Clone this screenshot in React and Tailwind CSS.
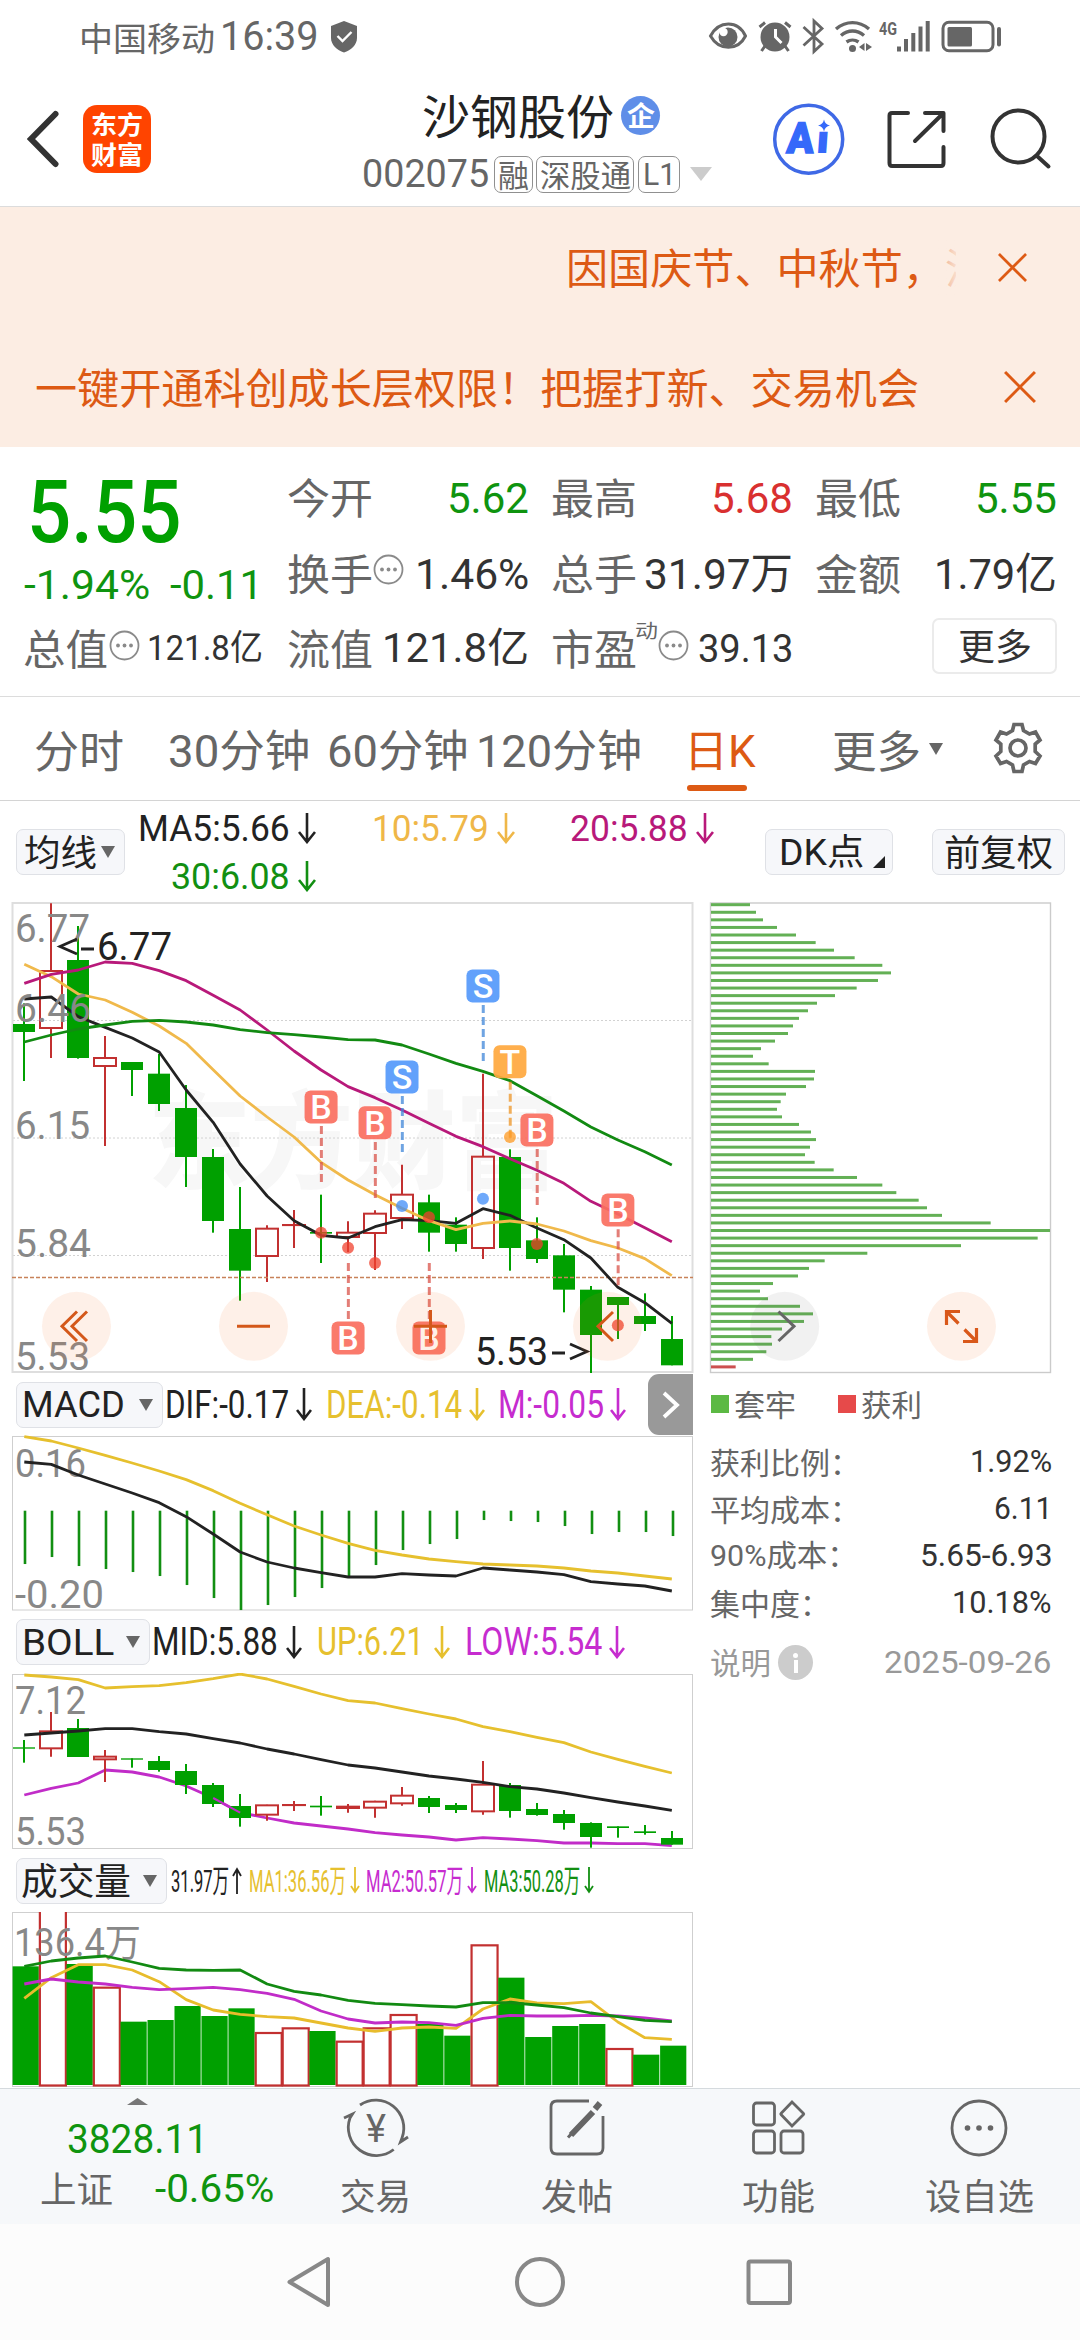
import React, { useLayoutEffect, useRef, useState } from "react";

const CJK_ONLY = /^[\u3000-\u9fff\uff00-\uffef]+$/;

/* Text squeezed or stretched to a fixed ink width; pure Chinese runs sit slightly lower than digits. */
function Fit({ w, className = "", children }) {
  const ref = useRef(null);
  const [s, setS] = useState(1);
  useLayoutEffect(() => {
    setS((w + 4) / ref.current.offsetWidth);
  }, [w]);
  const dy = CJK_ONLY.test(children) ? 1.5 : 0;
  return (
    <span className={"block shrink-0 whitespace-nowrap leading-none " + className} style={{ width: w }}>
      <span ref={ref} className="inline-block origin-left" style={{ transform: `translate(-2px, ${dy}px) scaleX(${s})` }}>
        {children}
      </span>
    </span>
  );
}

const G = "#00a000";
const R = "#c23030";

/* ---------- chart data (pixel values in each chart's own scale) ---------- */
const KLINE = [
  ["g", 340, 402, 426, 573], ["r", 40, 243, 414, 504], ["g", 108, 210, 504, 506], ["r", 438, 504, 528, 768],
  ["g", 516, 516, 540, 618], ["g", 492, 551, 642, 663], ["g", 585, 654, 801, 891], ["g", 777, 801, 993, 1028],
  ["g", 891, 1017, 1142, 1232], ["r", 1006, 1016, 1098, 1176], ["r", 960, 1005, 1005, 1074], ["g", 914, 1026, 1031, 1119],
  ["r", 994, 1028, 1041, 1086], ["r", 961, 971, 1029, 1140], ["r", 824, 914, 984, 1017], ["g", 914, 937, 1028, 1085],
  ["g", 982, 1004, 1062, 1085], ["r", 551, 800, 1074, 1107], ["g", 778, 801, 1074, 1142], ["g", 982, 1051, 1107, 1119],
  ["g", 1062, 1096, 1199, 1267], ["g", 1188, 1199, 1335, 1449], ["g", 1221, 1221, 1245, 1347], ["g", 1210, 1278, 1302, 1323],
  ["g", 1278, 1347, 1426, 1426],
];
const MA5 = [327, 321, 380, 412, 444, 486, 600, 697, 822, 918, 992, 1036, 1044, 1010, 989, 992, 1000, 956, 976, 1014, 1049, 1104, 1192, 1238, 1300];
const MA10 = [223, 260, 312, 330, 367, 408, 460, 539, 618, 681, 741, 817, 870, 914, 955, 992, 1019, 1000, 993, 1002, 1023, 1052, 1074, 1106, 1157];
const MA20 = [280, 253, 240, 216, 220, 242, 272, 316, 360, 420, 483, 540, 590, 623, 660, 700, 739, 770, 806, 841, 880, 934, 972, 1013, 1055];
const MA30 = [456, 435, 417, 405, 394, 391, 396, 405, 419, 428, 434, 441, 449, 450, 465, 492, 520, 544, 572, 617, 663, 711, 750, 785, 825];
const HIST = [582, 561, 588, 597, 606, 618, 645, 684, 720, 705, 681, 654, 624, 585, 540, 522, 507, 450, 453, 456, 468, 492, 486, 486, 498];
const DIF = [276, 283, 315, 342, 369, 398, 440, 492, 546, 576, 594, 608, 621, 621, 611, 615, 618, 594, 600, 606, 614, 635, 642, 648, 663];
const DEA = [200, 213, 234, 256, 279, 303, 329, 362, 400, 434, 468, 495, 520, 541, 555, 567, 575, 582, 585, 588, 594, 603, 609, 618, 627];
const UP = [45, 51, 59, 84, 80, 77, 68, 56, 42, 57, 79, 102, 122, 129, 146, 162, 177, 200, 215, 232, 248, 276, 298, 319, 339];
const MID = [225, 219, 213, 206, 206, 215, 222, 236, 249, 267, 282, 299, 315, 324, 336, 348, 357, 367, 380, 387, 399, 413, 426, 438, 451];
const LOW = [405, 385, 369, 330, 336, 351, 378, 414, 458, 474, 489, 498, 507, 518, 525, 531, 540, 533, 537, 542, 549, 549, 551, 551, 557];
const BK = [
  ["g", 240, 262, 266, 308], ["r", 156, 214, 265, 290], ["g", 177, 204, 291, 291], ["r", 270, 290, 298, 366],
  ["g", 295, 295, 299, 323], ["g", 288, 303, 330, 335], ["g", 312, 333, 375, 402], ["g", 369, 375, 432, 441],
  ["g", 402, 438, 474, 500], ["r", 434, 436, 464, 482], ["r", 423, 435, 435, 453], ["g", 408, 437, 442, 467],
  ["r", 432, 440, 444, 458], ["r", 422, 425, 443, 473], ["r", 381, 407, 430, 437], ["g", 408, 414, 441, 459],
  ["g", 429, 435, 450, 459], ["r", 303, 374, 454, 464], ["g", 369, 375, 453, 473], ["g", 429, 447, 465, 467],
  ["g", 450, 462, 489, 509], ["g", 487, 489, 531, 563], ["g", 499, 499, 504, 533], ["g", 495, 514, 519, 524],
  ["g", 513, 534, 554, 554],
];
const VOL = [
  ["g", 919], ["r", 740], ["g", 912], ["r", 980], ["g", 1085], ["g", 1080], ["g", 1038], ["g", 1068], ["g", 1045],
  ["r", 1116], ["r", 1102], ["g", 1113], ["r", 1142], ["r", 1102], ["r", 1062], ["g", 1092], ["g", 1127], ["r", 853],
  ["g", 953], ["g", 1131], ["g", 1098], ["g", 1092], ["r", 1164], ["g", 1184], ["g", 1157],
];
const V1 = [1015, 953, 914, 914, 930, 965, 1019, 1050, 1063, 1070, 1074, 1089, 1104, 1114, 1104, 1101, 1105, 1047, 1017, 1029, 1031, 1025, 1086, 1133, 1138];
const V2 = [972, 957, 966, 972, 982, 989, 986, 982, 989, 1000, 1018, 1053, 1077, 1089, 1086, 1088, 1096, 1075, 1066, 1068, 1068, 1066, 1068, 1074, 1083];
const V3 = [919, 903, 894, 888, 906, 925, 930, 931, 930, 972, 994, 1005, 1021, 1030, 1034, 1038, 1041, 1028, 1028, 1035, 1043, 1059, 1070, 1081, 1085];
const CHIPS = [
  180, 198, 219, 261, 318, 377, 432, 494, 577, 603, 564, 500, 435, 381, 354, 327, 309, 294, 255, 213, 189, 236, 375, 372, 348,
  288, 272, 261, 276, 327, 363, 378, 360, 345, 374, 431, 501, 577, 619, 686, 711, 756, 902, 1080, 1043, 813, 532, 404, 357,
  324, 249, 210, 234, 330, 369, 342, 276, 244, 246, 229, 189, 137,
];

const cx = (i) => 24.3 + 26.98 * i;

function Line({ data, base, color, w = 2.8 }) {
  return (
    <polyline fill="none" stroke={color} strokeWidth={w} strokeLinejoin="round" points={data.map((v, i) => `${cx(i)},${base + v / 3}`).join(" ")} />
  );
}

function Candles({ data, base }) {
  return data.map(([c, h, t, b, l], i) => {
    const x = Math.round(cx(i));
    const Y = (v) => base + v / 3;
    if (c === "g")
      return (
        <g key={i} fill={G}>
          <rect x={x - 1} y={Y(h)} width="2" height={(l - h) / 3} />
          <rect x={x - 11} y={Y(t)} width="22" height={(b - t) / 3} />
        </g>
      );
    return (
      <g key={i} stroke={R} strokeWidth="2" fill="none">
        <path d={`M${x} ${Y(h)}V${Y(t)}M${x} ${Y(b)}V${Y(l)}`} />
        <rect x={x - 11} y={Y(t)} width="22" height={Math.max((b - t) / 3, 0.1)} />
      </g>
    );
  });
}

function Axis({ x = 17, y, w, children, fill = "#888888", size = 39 }) {
  return (
    <text x={x - 2} y={y} fontSize={size} fill={fill} textLength={w + 4} lengthAdjust="spacingAndGlyphs">
      {children}
    </text>
  );
}

const MARKS = [
  ["B", 11, 651, 708, 1028], ["B", 13, 698, 756, 1119], ["S", 14, 561, 618, 948], ["S", 17, 288, 345, 926],
  ["T", 18, 515, 575, 741], ["B", 19, 720, 777, 1062], ["B", 22, 960, 1018, 1306], ["B", 12, 1344, 1119, 1073], ["B", 15, 1344, 1119, 982],
];
const MC = { B: ["#fa6f5f", "#d9534a"], S: ["#5599fb", "#3f86d8"], T: ["#ffa83e", "#ec9426"] };

function MainChart() {
  return (
    <svg className="block" width="705" height="472" viewBox="0 902 705 472">
      <text x="148" y="1180" fontSize="106" fontWeight="900" fill="#f7f7f7" textLength="410" lengthAdjust="spacingAndGlyphs">
        东方财富
      </text>
      {[1020.5, 1138, 1255.5].map((y) => (
        <line key={y} x1="13" x2="692" y1={y} y2={y} stroke="#d2d2d2" strokeWidth="1" strokeDasharray="2 2" />
      ))}
      <rect x="12.5" y="903" width="680" height="469" fill="none" stroke="#dedede" strokeWidth="2" />
      <Candles data={KLINE} base={890} />
      <line x1="12" x2="693" y1="1277.5" y2="1277.5" stroke="#c8825a" strokeWidth="1.3" strokeDasharray="4 2" />
      <Line data={MA5} base={890} color="#222" />
      <Line data={MA10} base={890} color="#f0b94b" />
      <Line data={MA20} base={890} color="#b8197a" />
      <Line data={MA30} base={890} color="#128a12" />
      <Axis y={942} w={71}>6.77</Axis>
      <Axis y={1022} w={72}>6.46</Axis>
      <Axis y={1139} w={71}>6.15</Axis>
      <Axis y={1257} w={72}>5.84</Axis>
      <Axis y={1370} w={71}>5.53</Axis>
      <path d="M77 939L60 946.5L77 954M81 949H94" fill="none" stroke="#222" strokeWidth="2.8" />
      <Axis x={99} y={960} w={71} fill="#222">6.77</Axis>
      <Axis x={477} y={1365} w={69} fill="#222">5.53</Axis>
      <path d="M552 1353H565M570 1344L587 1351.5L570 1359" fill="none" stroke="#222" strokeWidth="2.8" />
      {MARKS.map(([t, i, c, d, dot], k) => {
        const x = cx(i);
        const y = 890 + c / 3;
        return (
          <g key={k}>
            <line x1={x + 0.3} x2={x + 0.3} y1={890 + d / 3} y2={890 + d / 3 + 56} stroke={MC[t][1]} strokeOpacity="0.75" strokeWidth="3" strokeDasharray="8 4" />
            <circle cx={x} cy={890 + dot / 3} r="6" fill={t === "B" ? "#f0402e" : t === "S" ? "#3f8cf8" : "#fd9a22"} fillOpacity="0.75" />
            <rect x={x - 16.5} y={y - 16.5} width="33" height="33" rx="6" fill={MC[t][0]} fillOpacity="0.92" />
            <text x={x} y={y + 12} textAnchor="middle" fontSize="34" fontWeight="500" fill="#fff">
              {t}
            </text>
          </g>
        );
      })}
      {[76.5, 253.5, 430.5, 607.5].map((x) => (
        <circle key={x} cx={x} cy="1326.3" r="34.5" fill="#f8681c" fillOpacity="0.1" />
      ))}
      <path
        d="M77 1311.5L62 1326.3L77 1341M87 1311.5L72 1326.3L87 1341M237 1326.3H270M414 1326.3H447M430.5 1310V1343M613 1312L598 1326.3L613 1341"
        fill="none"
        stroke="#d4581a"
        strokeWidth="3"
      />
    </svg>
  );
}

function MacdChart() {
  return (
    <svg className="block" width="705" height="176" viewBox="0 1435 705 176">
      <rect x="12.5" y="1436.5" width="680" height="173.5" fill="none" stroke="#cfcfcf" />
      {HIST.map((v, i) => (
        <rect key={i} x={Math.round(cx(i)) - 0.3} y="1510.7" width="2.6" height={(v - 422) / 3} fill="#128f12" />
      ))}
      <Axis y={1477} w={67} size={38}>0.16</Axis>
      <Axis y={1608} w={85} size={38}>-0.20</Axis>
      <Line data={DIF} base={1370} color="#222" />
      <Line data={DEA} base={1370} color="#e6c02e" />
    </svg>
  );
}

function BollChart() {
  return (
    <svg className="block" width="705" height="177" viewBox="0 1673 705 177">
      <rect x="12.5" y="1674.5" width="680" height="174" fill="none" stroke="#cfcfcf" />
      <Line data={LOW} base={1660} color="#c12cc8" />
      <Candles data={BK} base={1660} />
      <polyline fill="none" stroke="#c12cc8" strokeWidth="2" points={`${cx(7)},1798 ${cx(8)},1812.6`} />
      <Line data={MID} base={1660} color="#222" />
      <Line data={UP} base={1660} color="#e6c02e" />
      <Axis y={1714} w={67} size={38}>7.12</Axis>
      <Axis y={1845} w={67} size={38}>5.53</Axis>
    </svg>
  );
}

function VolChart() {
  return (
    <svg className="block" width="705" height="177" viewBox="0 1911 705 177">
      <clipPath id="volClip">
        <rect x="12" y="1912" width="681" height="175" />
      </clipPath>
      <rect x="12.5" y="1912.5" width="680" height="174" fill="none" stroke="#cfcfcf" />
      <g clipPath="url(#volClip)">
        {VOL.map(([c, t], i) => {
          const x = 12.6 + 26.98 * i;
          const y = 1660 + t / 3;
          return c === "g" ? (
            <rect key={i} x={x} y={y} width="26.2" height={2085 - y} fill={G} />
          ) : (
            <rect key={i} x={x + 0.3} y={y + 1} width="26" height={2084.5 - y} fill="#fff" stroke={R} strokeWidth="2.2" />
          );
        })}
      </g>
      <Axis y={1956} x={16} w={123} size={38}>136.4万</Axis>
      <Line data={V1} base={1660} color="#e8bc2c" />
      <Line data={V2} base={1660} color="#c12cc8" />
      <Line data={V3} base={1660} color="#128a12" />
    </svg>
  );
}

function ChipChart() {
  return (
    <svg className="block" width="375" height="472" viewBox="705 902 375 472">
      <rect x="710.5" y="903" width="340" height="469.5" fill="none" stroke="#cbcbcb" strokeWidth="1.4" />
      {CHIPS.map((e, i) => (
        <rect key={i} x="711" y={903.2 + 7.577 * i} width={(e - 63) / 3} height="3" fill={i === 61 ? "#cc5050" : "#63b055"} />
      ))}
      <circle cx="784.7" cy="1326.3" r="34.5" fill="#666" fillOpacity="0.09" />
      <path d="M778.5 1311.5L794 1326.3L778.5 1341" fill="none" stroke="#666" strokeWidth="3" />
      <circle cx="961.5" cy="1326.3" r="34.5" fill="#f8681c" fillOpacity="0.1" />
      <path
        d="M946.5 1325V1311.5H960M947 1312L958.5 1323.5M976.5 1328V1341.5H963M976 1341L964.5 1329.5"
        fill="none"
        stroke="#d9581a"
        strokeWidth="3.2"
      />
    </svg>
  );
}

/* ---------- small pieces ---------- */
function Arrow({ w = 18, h = 31, up = false, className = "" }) {
  const m = w / 2;
  return (
    <svg className={"shrink-0 " + className} width={w} height={h} viewBox={`0 0 ${w} ${h}`} fill="none" stroke="currentColor" strokeWidth={w < 12 ? 1.8 : 2.6}>
      <path d={up ? `M${m} ${h}V2M1 ${m + 4}L${m} 2L${w - 1} ${m + 4}` : `M${m} 0V${h - 2}M1 ${h - m - 3}L${m} ${h - 2}L${w - 1} ${h - m - 3}`} />
    </svg>
  );
}

function Down({ className = "" }) {
  return (
    <svg className={"shrink-0 " + className} width="14" height="12" viewBox="0 0 14 12">
      <path d="M0 0H14L7 12Z" fill="currentColor" />
    </svg>
  );
}

function Dots({ className = "" }) {
  return (
    <svg className={"shrink-0 " + className} width="31" height="31" viewBox="0 0 31 31">
      <circle cx="15.5" cy="15.5" r="14" fill="none" stroke="#8a8a8a" strokeWidth="1.8" />
      <g fill="#8a8a8a">
        <circle cx="9" cy="15.5" r="1.9" />
        <circle cx="15.5" cy="15.5" r="1.9" />
        <circle cx="22" cy="15.5" r="1.9" />
      </g>
    </svg>
  );
}

function Close({ s, className = "" }) {
  return (
    <svg className={"shrink-0 " + className} width={s} height={s} viewBox="0 0 30 30" stroke="#dd5a14" strokeWidth="2.8">
      <path d="M1 1L29 29M29 1L1 29" />
    </svg>
  );
}

function StatusBar() {
  return (
    <div className="flex h-[72px] items-center pt-[2px] pl-[81px] text-[#666]">
      <Fit w={132} className="text-[33px]">中国移动</Fit>
      <Fit w={95} className="ml-[9px] text-[40px]">16:39</Fit>
      <svg className="ml-[14px]" width="26" height="32" viewBox="0 0 26 32">
        <path d="M13 0L26 5V17C26 24 20 29 13 31.5C6 29 0 24 0 17V5Z" fill="#666" />
        <path d="M6.5 15L11.5 20L20.5 11" fill="none" stroke="#fff" strokeWidth="2.4" />
      </svg>
      <svg className="ml-[351px] shrink-0" width="300" height="40" viewBox="708 17 300 40" fill="none" stroke="#666">
        <path d="M710.5 36C719 20 738 20 745.5 36C738 51 719 51 710.5 36Z" strokeWidth="3" />
        <circle cx="728" cy="37" r="9.5" fill="#666" stroke="none" />
        <circle cx="723.5" cy="32" r="4.2" fill="#fff" stroke="none" />
        <circle cx="775" cy="37" r="14.5" fill="#666" stroke="none" />
        <path d="M759.5 27L765 22.5M790.5 27L785 22.5M765 46L761.5 51M785 46L788.5 51" strokeWidth="3" />
        <path d="M775.5 29V37L781.5 43" stroke="#fff" strokeWidth="3" />
        <path d="M803.5 27L822 44L814 51.5V21L822 28.5L803.5 45.5" strokeWidth="2.8" />
        <path d="M836 29C846 20.500 859 20.500 869 29M841 35.500C848 29.500 857 29.500 864 35.500M846.500 42C850 39.500 855 39.500 858.500 42" strokeWidth="3.4" />
        <circle cx="852.5" cy="48.500" r="3.500" fill="#666" stroke="none" />
        <path d="M859 47L864.500 43V51ZM866 43L872 47L866 51Z" fill="#666" stroke="none" />
        <text x="879" y="35" fontSize="18" fontWeight="700" fill="#666" stroke="none" textLength="18" lengthAdjust="spacingAndGlyphs">4G</text>
        <path d="M899 46.500V51.500M906 39V51.500M913.300 33V51.500M920.500 26.500V51.500M927.700 21V51.500" strokeWidth="4" />
        <rect x="943" y="22.300" width="50" height="28.500" rx="6" strokeWidth="3" />
        <rect x="947.500" y="27" width="24.500" height="19.500" rx="1.500" fill="#666" stroke="none" />
        <path d="M999 29V44.500" strokeWidth="4" strokeLinecap="round" />
      </svg>
    </div>
  );
}

function Tag({ className, w, children }) {
  return (
    <div className={"flex h-[37px] items-center justify-center rounded-[7px] border border-[#909090] text-[31px] " + className}>
      <Fit w={w}>{children}</Fit>
    </div>
  );
}

function Header() {
  return (
    <div className="flex h-[135px] items-start border-b border-[#dcdcdc]">
      <svg className="mt-[38px] ml-[27px]" width="32" height="58" viewBox="0 0 32 58">
        <path d="M28.500 4L4 29L28.500 54" fill="none" stroke="#333" strokeWidth="6" strokeLinecap="round" />
      </svg>
      <div className="mt-[33px] ml-[24px] flex h-[68px] w-[68px] flex-col items-center rounded-[14px] bg-[#ff4400] pt-[6px] text-[25px] font-bold text-white">
        <Fit w={48} className="h-[30px]">东方</Fit>
        <Fit w={48} className="h-[30px]">财富</Fit>
      </div>
      <div className="mt-[13px] ml-[213px] w-[350px]">
        <div className="flex h-[60px] items-center pl-[60px] text-[#222]">
          <Fit w={188} className="text-[47px]">沙钢股份</Fit>
          <div className="ml-[9px] flex h-[39px] w-[39px] items-center justify-center rounded-full bg-[#5f8ee8] text-[27px] font-bold text-white">
            <Fit w={24}>企</Fit>
          </div>
        </div>
        <div className="mt-[10px] flex h-[38px] items-center text-[#666]">
          <Fit w={123} className="text-[38px]">002075</Fit>
          <Tag w={27} className="ml-[7px] w-[39px]">融</Tag>
          <Tag w={87} className="ml-[3px] w-[98px]">深股通</Tag>
          <Tag w={29} className="ml-[4px] w-[42px]">L1</Tag>
          <svg className="ml-[10px] shrink-0" width="22" height="14" viewBox="0 0 22 14">
            <path d="M0 0H22L11 14Z" fill="#ccc" />
          </svg>
        </div>
      </div>
      <svg className="mt-[30px] ml-[56px] shrink-0" width="286" height="76" viewBox="770 102 286 76" fill="none">
        <circle cx="808.700" cy="139.300" r="34" stroke="#3f69e6" strokeWidth="3.500" />
        <g transform="translate(786 153) skewX(-4)" fill="#3569fa" fontWeight="900">
          <text x="0" y="0" fontSize="43" textLength="27" lengthAdjust="spacingAndGlyphs" stroke="#3569fa" strokeWidth="1.500">A</text>
          <text x="29" y="0" fontSize="40" textLength="14" lengthAdjust="spacingAndGlyphs">ı</text>
        </g>
        <path d="M824 119.500Q825 124.500 830 125.500Q825 126.500 824 131.500Q823 126.500 818 125.500Q823 124.500 824 119.500Z" fill="#3569fa" />
        <g stroke="#333" strokeWidth="4" strokeLinecap="round" strokeLinejoin="round">
          <path d="M908 113H892Q889.500 113 889.500 115.500V163Q889.500 166 892 166H941Q943.500 166 943.500 163V147" />
          <path d="M925 113H943.500V131M942 114.500L915 141" />
          <circle cx="1018.500" cy="136.500" r="26" />
          <path d="M1037 156L1048.500 166.500" />
        </g>
      </svg>
    </div>
  );
}

function Banners() {
  return (
    <div className="h-[240px] bg-[#fcede3] text-[42px] text-[#dd5a14]">
      <div className="flex h-[120px] items-center pt-[1px] pl-[568px]">
        <div className="relative flex h-[60px] w-[388px] items-center overflow-hidden">
          <Fit w={417} className="text-[42px]">因国庆节、中秋节，沪</Fit>
          <div className="absolute top-0 right-0 h-full w-[18px] bg-gradient-to-r from-[#fcede3]/50 to-[#fcede3]/90" />
        </div>
        <Close s={29} className="ml-[42px]" />
      </div>
      <div className="flex h-[120px] items-center pl-[37px]">
        <Fit w={880} className="pt-[2px]">一键开通科创成长层权限！把握打新、交易机会</Fit>
        <Close s={32} className="ml-[87px]" />
      </div>
    </div>
  );
}

function Quote() {
  return (
    <div className="grid h-[250px] grid-cols-4 gap-x-[26px] border-b border-[#dcdcdc] px-[25px] pt-[13px] text-[42px] text-[#666]">
      <div>
        <Fit w={151} className="flex h-[104px] items-center pl-[4px] text-[87px] font-medium text-[#00a000]">5.55</Fit>
        <div className="flex h-[44px] items-center text-[40px] text-[#0f940f]">
          <Fit w={122} className="ml-px">-1.94%</Fit>
          <Fit w={89} className="ml-[24px]">-0.11</Fit>
        </div>
        <div className="mt-[4px] flex h-[73px] items-center">
          <Fit w={81}>总值</Fit>
          <Dots className="mb-[7px] ml-[3px]" />
          <Fit w={112} className="ml-[9px] text-[35px] text-[#333]">121.8亿</Fit>
        </div>
      </div>
      <div>
        <div className="flex h-[76px] items-center justify-between">
          <Fit w={82}>今开</Fit>
          <Fit w={78} className="text-[43px] text-[#0f940f]">5.62</Fit>
        </div>
        <div className="flex h-[76px] items-center">
          <Fit w={82}>换手</Fit>
          <Dots className="mb-[9px] ml-[2px]" />
          <Fit w={110} className="ml-[13px] text-[43px] text-[#333]">1.46%</Fit>
        </div>
        <div className="flex h-[73px] items-center justify-between">
          <Fit w={82}>流值</Fit>
          <Fit w={143} className="text-[41px] text-[#333]">121.8亿</Fit>
        </div>
      </div>
      <div>
        <div className="flex h-[76px] items-center justify-between">
          <Fit w={82}>最高</Fit>
          <Fit w={78} className="text-[43px] text-[#d93030]">5.68</Fit>
        </div>
        <div className="flex h-[76px] items-center justify-between">
          <Fit w={82}>总手</Fit>
          <Fit w={145} className="text-[43px] text-[#333]">31.97万</Fit>
        </div>
        <div className="flex h-[73px] items-center">
          <Fit w={82}>市盈</Fit>
          <Fit w={19} className="mb-[38px] ml-[2px] text-[19px]">动</Fit>
          <Dots className="mb-[7px] ml-[2px]" />
          <Fit w={91} className="ml-[11px] text-[38px] text-[#333]">39.13</Fit>
        </div>
      </div>
      <div>
        <div className="flex h-[76px] items-center justify-between">
          <Fit w={82}>最低</Fit>
          <Fit w={78} className="text-[43px] text-[#0f940f]">5.55</Fit>
        </div>
        <div className="flex h-[76px] items-center justify-between">
          <Fit w={82}>金额</Fit>
          <Fit w={119} className="text-[43px] text-[#333]">1.79亿</Fit>
        </div>
        <div className="flex h-[73px] items-center justify-end">
          <div className="-mr-[2px] mb-[5px] flex h-[56px] w-[125px] items-center justify-center rounded-[7px] border-2 border-[#ebebeb] text-[36px] text-[#333]">
            <Fit w={70}>更多</Fit>
          </div>
        </div>
      </div>
    </div>
  );
}

function Tabs() {
  return (
    <div className="flex h-[104px] items-center border-b border-[#d4d4d4] pt-[5px] text-[44px] text-[#666]">
      <Fit w={86} className="ml-[36px]">分时</Fit>
      <Fit w={138} className="ml-[48px] pt-[2px]">30分钟</Fit>
      <Fit w={137} className="ml-[21px] pt-[2px]">60分钟</Fit>
      <Fit w={162} className="ml-[12px] pt-[2px]">120分钟</Fit>
      <div className="relative ml-[46px] text-[#dd5a14]">
        <Fit w={68} className="pt-[2px]">日K</Fit>
        <div className="absolute top-[57px] left-[1px] h-[6px] w-[60px] rounded-full bg-[#dd5a14]" />
      </div>
      <Fit w={85} className="ml-[80px]">更多</Fit>
      <Down className="mb-[4px] ml-[10px]" />
      <svg className="mb-[6px] ml-[49px]" width="52" height="52" viewBox="0 0 52 52" fill="none" stroke="#666" strokeWidth="3.700">
        <path d="M20.500 8.500L22 2.500H30L31.500 8.500L37.500 12L43.500 10L48 18L43.200 22V29.500L48 34L43.500 41.500L37.500 39.500L31.500 43L30 49.500H22L20.500 43L14.500 39.500L8.500 41.500L4 34L8.800 29.500V22L4 18L8.500 10L14.500 12Z" />
        <circle cx="26" cy="26" r="8" />
      </svg>
    </div>
  );
}

function Pill({ className = "", children }) {
  return (
    <div className={"flex h-[46px] shrink-0 items-center rounded-[7px] border border-[#dfe1e6] bg-[#f6f7fa] text-[#222] " + className}>{children}</div>
  );
}

function MaRow() {
  return (
    <div className="flex h-[101px] items-center">
      <Pill className="ml-[16px] w-[109px] pl-[9px] text-[36px]">
        <Fit w={69}>均线</Fit>
        <Down className="ml-[6px] text-[#666]" />
      </Pill>
      <div className="ml-[15px] w-[625px] pt-[2px] text-[37px]">
        <div className="flex h-[48px] items-center">
          <div className="flex items-center text-[#222]">
            <Fit w={148}>MA5:5.66</Fit>
            <Arrow className="ml-[10px]" />
          </div>
          <div className="ml-[58px] flex items-center text-[#efb748]">
            <Fit w={113}>10:5.79</Fit>
            <Arrow className="ml-[10px]" />
          </div>
          <div className="ml-[57px] flex items-center text-[#b8197a]">
            <Fit w={114}>20:5.88</Fit>
            <Arrow className="ml-[10px]" />
          </div>
        </div>
        <div className="flex h-[48px] items-center pl-[33px] text-[#128f12]">
          <Fit w={115}>30:6.08</Fit>
          <Arrow className="ml-[10px]" />
        </div>
      </div>
      <Pill className="w-[128px] pl-[15px] text-[36px]">
        <Fit w={81} className="pt-[2px]">DK点</Fit>
        <svg className="mt-[20px] ml-[11px]" width="12" height="12" viewBox="0 0 12 12">
          <path d="M12 0V12H0Z" fill="#222" />
        </svg>
      </Pill>
      <Pill className="ml-[39px] w-[133px] justify-center text-[36px]">
        <Fit w={105}>前复权</Fit>
      </Pill>
    </div>
  );
}

function MacdRow() {
  return (
    <div className="flex h-[61px] items-center text-[38px]">
      <Pill className="ml-[16px] w-[147px] pl-[7px]">
        <Fit w={99} className="text-[37px]">MACD</Fit>
        <Down className="ml-[16px] text-[#666]" />
      </Pill>
      <div className="flex items-center pl-[4px] text-[#222]">
        <Fit w={120}>DIF:-0.17</Fit>
        <Arrow w={16} h={33} className="ml-[9px]" />
      </div>
      <div className="ml-[16px] flex items-center text-[#e6c02e]">
        <Fit w={132}>DEA:-0.14</Fit>
        <Arrow w={16} h={33} className="ml-[9px]" />
      </div>
      <div className="ml-[15px] flex items-center text-[#c62ccf]">
        <Fit w={102}>M:-0.05</Fit>
        <Arrow w={16} h={33} className="ml-[8px]" />
      </div>
      <div className="ml-[22px] flex h-[61px] w-[45px] items-center justify-center rounded-l-[11px] bg-[#999]">
        <svg width="18" height="28" viewBox="0 0 18 28" fill="none" stroke="#fff" strokeWidth="3.800">
          <path d="M2 2L15 14L2 26" />
        </svg>
      </div>
    </div>
  );
}

function BollRow() {
  return (
    <div className="flex h-[62px] items-center text-[38px]">
      <Pill className="ml-[16px] w-[134px] pl-[7px]">
        <Fit w={88} className="text-[37px]">BOLL</Fit>
        <Down className="ml-[14px] text-[#666]" />
      </Pill>
      <div className="flex items-center pl-[4px] text-[#222]">
        <Fit w={122}>MID:5.88</Fit>
        <Arrow w={16} h={33} className="ml-[10px]" />
      </div>
      <div className="ml-[17px] flex items-center text-[#e6c02e]">
        <Fit w={103}>UP:6.21</Fit>
        <Arrow w={16} h={33} className="ml-[12px]" />
      </div>
      <div className="ml-[17px] flex items-center text-[#c62ccf]">
        <Fit w={133}>LOW:5.54</Fit>
        <Arrow w={16} h={33} className="ml-[9px]" />
      </div>
    </div>
  );
}

function VolRow() {
  return (
    <div className="flex h-[61px] items-center text-[32px]">
      <Pill className="ml-[16px] w-[151px] pl-[6px] text-[37px]">
        <Fit w={106}>成交量</Fit>
        <Down className="ml-[14px] text-[#666]" />
      </Pill>
      <div className="flex items-center pl-[6px] text-[#222]">
        <Fit w={54}>31.97万</Fit>
        <Arrow w={10} h={27} up className="ml-[5px]" />
      </div>
      <div className="ml-[9px] flex items-center text-[#e6c02e]">
        <Fit w={93}>MA1:36.56万</Fit>
        <Arrow w={10} h={27} className="ml-[6px]" />
      </div>
      <div className="ml-[8px] flex items-center text-[#c62ccf]">
        <Fit w={93}>MA2:50.57万</Fit>
        <Arrow w={10} h={27} className="ml-[6px]" />
      </div>
      <div className="ml-[9px] flex items-center text-[#128f12]">
        <Fit w={92}>MA3:50.28万</Fit>
        <Arrow w={10} h={27} className="ml-[6px]" />
      </div>
    </div>
  );
}

const STATS = [
  ["获利比例：", 146, "1.92%", 78],
  ["平均成本：", 146, "6.11", 54],
  ["90%成本：", 144, "5.65-6.93", 128],
  ["集中度：", 116, "10.18%", 96],
];

function ChipPanel() {
  return (
    <div className="w-[375px]">
      <ChipChart />
      <div className="flex h-[60px] items-center pl-[6px] text-[30px] text-[#666]">
        <div className="h-[18px] w-[18px] bg-[#5cb944]" />
        <Fit w={58} className="ml-[7px]">套牢</Fit>
        <div className="ml-[44px] h-[18px] w-[18px] bg-[#e64a4a]" />
        <Fit w={57} className="ml-[7px]">获利</Fit>
      </div>
      <div className="mt-[4px] pr-[30px] pl-[7px] text-[30px] text-[#666]">
        {STATS.map(([k, kw, v, vw]) => (
          <div key={k} className="flex h-[47px] items-center justify-between">
            <Fit w={kw}>{k}</Fit>
            <Fit w={vw} className="text-[31px] text-[#333]">{v}</Fit>
          </div>
        ))}
        <div className="flex h-[72px] items-center text-[#999]">
          <Fit w={57}>说明</Fit>
          <div className="ml-[9px] flex h-[35px] w-[35px] flex-col items-center rounded-full bg-[#ccc] pt-[8px]">
            <div className="h-[5px] w-[5px] rounded-full bg-white" />
            <div className="mt-[2px] h-[13px] w-[4px] bg-white" />
          </div>
          <Fit w={164} className="ml-auto text-[31px]">2025-09-26</Fit>
        </div>
      </div>
    </div>
  );
}

const ICONS = {
  交易: (
    <>
      <path d="M17 7A28 28 0 0 1 59 40L57.500 44L65 39" />
      <path d="M50.700 51.500A28 28 0 0 1 7 20L9.500 16L1 20" />
      <text x="33" y="44" fontSize="38" textAnchor="middle" fill="#666" stroke="none">¥</text>
    </>
  ),
  发帖: (
    <>
      <path d="M45 3H13Q7 3 7 9V50Q7 56 13 56H53Q59 56 59 50V18" />
      <path d="M56 5L51 11M49 14L27 37" strokeWidth="6" />
      <path d="M30 33L24 39.500" strokeWidth="3" />
    </>
  ),
  功能: (
    <>
      <rect x="8.500" y="5" width="21" height="22" rx="3" />
      <rect x="8.500" y="33" width="21" height="22" rx="3" />
      <rect x="36" y="33" width="22" height="22" rx="3" />
      <path d="M47 4L58.500 15.500Q59 16 58.500 16.500L47 28L36 16.500Q35.500 16 36 15.500Z" />
    </>
  ),
  设自选: (
    <>
      <circle cx="33" cy="30" r="27" />
      <g fill="#666" stroke="none">
        <circle cx="21.500" cy="30" r="2.800" />
        <circle cx="33" cy="30" r="2.800" />
        <circle cx="44.500" cy="30" r="2.800" />
      </g>
    </>
  ),
};
const TABS = [["交易", 67], ["发帖", 68], ["功能", 69], ["设自选", 105]];

function BottomBar() {
  return (
    <div className="flex h-[136px] border-t border-[#d5dade] bg-[#f6f8fa] text-[36px] text-[#666]">
      <div className="flex w-[275px] flex-col items-center pt-[9px]">
        <svg width="21" height="7" viewBox="0 0 21 7">
          <path d="M0 7H21L10.500 0Z" fill="#777" />
        </svg>
        <Fit w={137} className="flex h-[69px] items-center text-[41px] text-[#0f940f]">3828.11</Fit>
        <div className="flex h-[30px] items-center self-start pl-[42px]">
          <Fit w={69}>上证</Fit>
          <Fit w={115} className="ml-[46px] text-[39px] text-[#0f940f]">-0.65%</Fit>
        </div>
      </div>
      {TABS.map(([t, w]) => (
        <div key={t} className="flex flex-1 flex-col items-center pt-[9px]">
          <svg width="66" height="60" viewBox="0 0 66 60" fill="none" stroke="#666" strokeWidth="2.800">
            {ICONS[t]}
          </svg>
          <Fit w={w} className="mt-[20px]">{t}</Fit>
        </div>
      ))}
    </div>
  );
}

function NavBar() {
  return (
    <div className="flex h-[116px] items-center bg-[#fcfcfc] pl-[285px]">
      <svg className="shrink-0" width="510" height="54" viewBox="285 2255 510 54" fill="none" stroke="#888" strokeWidth="4" strokeLinejoin="round">
        <path d="M328 2259V2305L289.500 2282Z" />
        <circle cx="540" cy="2282" r="23" />
        <rect x="748.500" y="2261.500" width="41.500" height="41.500" rx="2" />
      </svg>
    </div>
  );
}

export default function App() {
  return (
    <div className="h-[2340px] w-[1080px] overflow-hidden bg-white font-['Roboto','Noto_Sans_CJK_SC',sans-serif]">
      <StatusBar />
      <Header />
      <Banners />
      <Quote />
      <Tabs />
      <MaRow />
      <div className="flex h-[1186px]">
        <div className="w-[705px]">
          <MainChart />
          <MacdRow />
          <MacdChart />
          <BollRow />
          <BollChart />
          <VolRow />
          <VolChart />
        </div>
        <ChipPanel />
      </div>
      <BottomBar />
      <NavBar />
    </div>
  );
}
